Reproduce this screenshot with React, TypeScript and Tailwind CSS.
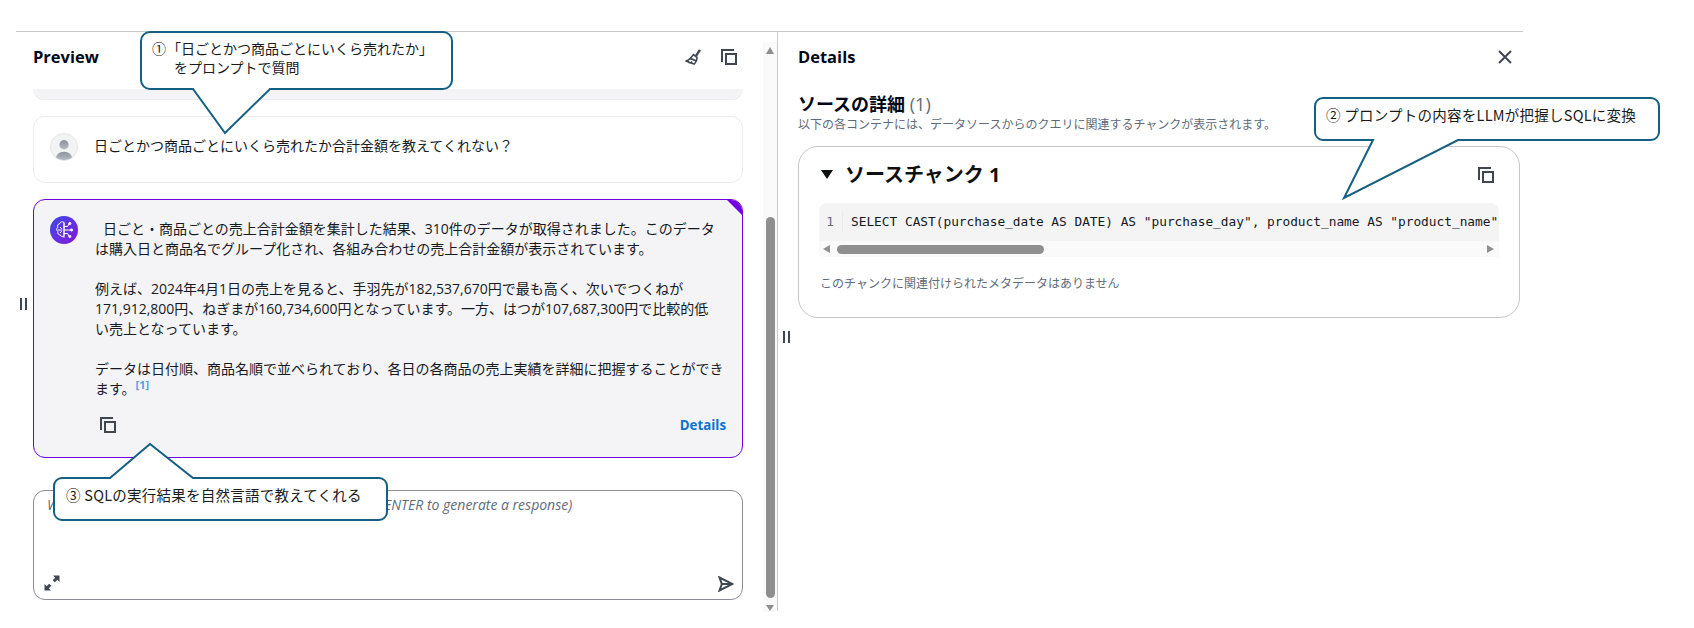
const uiFont = 'font-["Open_Sans","Noto_Sans_CJK_JP",sans-serif]';

// ── Icons ─────────────────────────────────────────────────────────────────────

function CopyIcon({ className = '' }: { className?: string }) {
  return (
    <svg viewBox="0 0 16 16" className={`h-4 w-4 ${className}`} fill="none" stroke="#414750" strokeWidth="2">
      <rect x="5" y="5" width="10" height="10" />
      <path d="M1 13V1h12" />
    </svg>
  );
}

function BroomIcon() {
  return (
    <svg viewBox="0 0 16 16" className="h-4 w-4" fill="none" stroke="#414750" strokeWidth="1.6" strokeLinejoin="round">
      <path d="M15 .8 10.8 7.200" strokeWidth="2.400" />
      <path d="M8.300 5.600 12 8.300c.2 2.200-.9 5-2.600 6.700l-2.200-.6-.7-1.500-.6 1.200-2-.7-.4-1.200-.7.500L1 12c2.300-.7 5.500-3.600 7.300-6.400Z" />
      <path d="M5 9.600c2 .2 4 1.200 6.300 2.400" strokeWidth="1.800" />
    </svg>
  );
}

function CloseIcon() {
  return (
    <svg viewBox="0 0 14 14" className="h-3.5 w-3.5" fill="none" stroke="#414750" strokeWidth="2">
      <path d="M1 1l12 12M13 1 1 13" />
    </svg>
  );
}

function ExpandIcon() {
  return (
    <svg viewBox="0 0 16 16" className="h-4 w-4" fill="#414750" stroke="none">
      <path d="M9 .5h6.500V7l-2.200-2.200-2.500 2.500-2.100-2.100 2.500-2.500Z" />
      <path d="M.5 9v6.500H7l-2.200-2.200 2.500-2.500-2.100-2.100-2.500 2.500Z" />
    </svg>
  );
}

function SendIcon() {
  return (
    <svg viewBox="0 0 16 16" className="h-4 w-4" fill="none" stroke="#414750" strokeWidth="2" strokeLinejoin="miter">
      <path d="M1.500 1.500 14.500 8 1.500 14.500 3.800 8Z" />
      <path d="M3.800 8h10" />
    </svg>
  );
}

function UserAvatar() {
  return (
    <div className="h-7 w-7 shrink-0 overflow-hidden rounded-full border border-[#e5e7eb] bg-[#f2f3f3]">
      <svg viewBox="0 0 28 28" className="h-full w-full">
        <defs>
          <linearGradient id="userShade" x1="0" y1="0" x2="0" y2="1">
            <stop offset="0" stopColor="#8d939c" />
            <stop offset="1" stopColor="#b4bac1" />
          </linearGradient>
        </defs>
        <circle cx="14" cy="11.500" r="5" fill="url(#userShade)" />
        <path d="M5 28c0-6 4-9 9-9s9 3 9 9Z" fill="url(#userShade)" />
      </svg>
    </div>
  );
}

function BotAvatar() {
  return (
    <div className="h-7 w-7 shrink-0 rounded-full bg-gradient-to-br from-[#2f45e6] to-[#8400dc]">
      <svg viewBox="0 0 28 28" className="h-full w-full" fill="none" stroke="#fff" strokeWidth="1">
        <path d="M14 6.500c-1.700-1.400-3.900-.6-4.200 1.100-1.900.3-2.800 2.200-1.900 3.600-1.700 1.100-1.600 3.500 0 4.400-.7 1.800.7 3.500 2.500 3.300.6 1.900 2.700 2.500 3.600 1.100Z" />
        <path d="M14 6.500v15M14 10.500h3.500l1.500-2.500M14 14h6M14 17.500h3.500l1.500 2.500M10 11l2 2M10 17l2-2M7.500 14H12" />
        <circle cx="19.800" cy="7.500" r="1.100" fill="#fff" />
        <circle cx="21.500" cy="14" r="1.100" fill="#fff" />
        <circle cx="19.800" cy="20.500" r="1.100" fill="#fff" />
      </svg>
    </div>
  );
}

function ResizeHandle() {
  return (
    <div className="flex gap-[3px]">
      <div className="h-3 w-[2px] bg-[#414750]" />
      <div className="h-3 w-[2px] bg-[#414750]" />
    </div>
  );
}

// ── Scrollbars ────────────────────────────────────────────────────────────────

function VerticalScrollbar() {
  return (
    <div className="ml-5 mt-[10px] flex h-[570px] w-[14px] shrink-0 flex-col items-center bg-[#fafafa] pt-[5px]">
      <div className="h-0 w-0 border-x-[4.500px] border-b-[7px] border-x-transparent border-b-[#8f8f8f]" />
      <div className="mt-[163px] h-[381px] w-[9px] rounded-full bg-[#8f8f8f]" />
      <div className="mt-[7px] h-0 w-0 border-x-[4.500px] border-t-[6px] border-x-transparent border-t-[#8f8f8f]" />
    </div>
  );
}

function HorizontalScrollbar() {
  return (
    <div className="flex h-4 items-center bg-[#fafafa] pl-1 pr-[5px]">
      <div className="h-0 w-0 border-y-[4.500px] border-r-[7px] border-y-transparent border-r-[#8f8f8f]" />
      <div className="ml-[7px] h-[9px] w-[207px] rounded-full bg-[#8f8f8f]" />
      <div className="ml-auto h-0 w-0 border-y-[4.500px] border-l-[7px] border-y-transparent border-l-[#8f8f8f]" />
    </div>
  );
}

// ── Annotation callouts ───────────────────────────────────────────────────────

function CalloutOne() {
  return (
    <div className="absolute left-[140px] top-[31px] h-[104px] w-[314px]">
      <svg viewBox="0 0 314 104" className="absolute inset-0 h-full w-full" fill="#fff" stroke="#156082" strokeWidth="2">
        <path d="M10 1h293a9 9 0 0 1 9 9v39a9 9 0 0 1-9 9H130L85 102 53 58H10a9 9 0 0 1-9-9V10a9 9 0 0 1 9-9Z" />
      </svg>
      <div className="absolute left-[12px] top-[8px] flex text-[14px] leading-[19px] text-[#1a1a1a]">
        <span className="w-[22px]">①</span>
        <span>
          <span className="-ml-[7px]">「日ごとかつ商品ごとにいくら売れたか」</span>
          <br />
          をプロンプトで質問
        </span>
      </div>
    </div>
  );
}

function CalloutTwo() {
  return (
    <div className="absolute left-[1314px] top-[97px] h-[104px] w-[346px]">
      <svg viewBox="0 0 346 104" className="absolute inset-0 h-full w-full" fill="#fff" stroke="#156082" strokeWidth="2">
        <path d="M9 1h328a8 8 0 0 1 8 8v26a8 8 0 0 1-8 8H144L30 101 59 43H9a8 8 0 0 1-8-8V9a8 8 0 0 1 8-8Z" />
      </svg>
      <div className="absolute left-[12px] top-[8px] whitespace-nowrap font-['Noto_Sans_CJK_JP',sans-serif] text-[14.500px] leading-[20px] tracking-[0.25px] text-[#1a1a1a]">
        ② プロンプトの内容をLLMが把握しSQLに変換
      </div>
    </div>
  );
}

function CalloutThree() {
  return (
    <div className="absolute left-[53px] top-[443px] h-[78px] w-[335px]">
      <svg viewBox="0 0 335 78" className="absolute inset-0 h-full w-full" fill="#fff" stroke="#156082" strokeWidth="2">
        <path d="M9 35h48L97 1l43 34h186a8 8 0 0 1 8 8v26a8 8 0 0 1-8 8H9a8 8 0 0 1-8-8V43a8 8 0 0 1 8-8Z" />
      </svg>
      <div className="absolute left-[13px] top-[42px] whitespace-nowrap font-['Noto_Sans_CJK_JP',sans-serif] text-[14.500px] leading-[20px] tracking-[0.25px] text-[#1a1a1a]">
        ③ SQLの実行結果を自然言語で教えてくれる
      </div>
    </div>
  );
}

// ── Panels ────────────────────────────────────────────────────────────────────

function PreviewPanel() {
  return (
    <div className="flex w-[710px] shrink-0 flex-col">
      <div className="flex h-[57px] items-center justify-between pb-[7px] pr-[6px]">
        <h2 className="text-[16.500px] font-bold text-[#000716]">Preview</h2>
        <div className="flex items-center gap-5">
          <BroomIcon />
          <CopyIcon />
        </div>
      </div>

      <div className="h-[11px] rounded-b-xl border-b border-[#eaeded] bg-[#f4f4f6]" />

      <div className="mt-4 flex h-[67px] gap-4 rounded-xl border border-[#eaeded] bg-white px-4 pt-4 text-[14px] leading-5 text-[#16191f]">
        <UserAvatar />
        <p className="pt-[3px]">日ごとかつ商品ごとにいくら売れたか合計金額を教えてくれない？</p>
      </div>

      <div className="relative mt-4 h-[259px] overflow-hidden rounded-xl border border-[#7300e0] bg-[#f4f4f6] px-4 pt-4 text-[14px] leading-5 text-[#16191f]">
        <div className="absolute right-0 top-0 h-[15px] w-[15px] bg-[#7300e0] [clip-path:polygon(0_0,100%_0,100%_100%)]" />
        <div className="flex gap-[17px]">
          <BotAvatar />
          <div className="whitespace-nowrap pt-[3px]">
            <p className="pl-2">日ごと・商品ごとの売上合計金額を集計した結果、310件のデータが取得されました。このデータ</p>
            <p>は購入日と商品名でグループ化され、各組み合わせの売上合計金額が表示されています。</p>
            <p className="mt-5">例えば、2024年4月1日の売上を見ると、手羽先が182,537,670円で最も高く、次いでつくねが</p>
            <p>171,912,800円、ねぎまが160,734,600円となっています。一方、はつが107,687,300円で比較的低</p>
            <p>い売上となっています。</p>
            <p className="mt-5">データは日付順、商品名順で並べられており、各日の各商品の売上実績を詳細に把握することができ</p>
            <p>
              ます。
              <sup className="text-[11px] font-bold text-[#539fe5]">[1]</sup>
            </p>
          </div>
        </div>
        <div className="mt-4 flex items-center justify-between pl-[50px]">
          <CopyIcon />
          <span className="text-[13.300px] font-bold text-[#0972d3]">Details</span>
        </div>
      </div>

      <div className="mt-8 flex h-[110px] flex-col justify-between rounded-xl border border-[#8c8c94] bg-white pb-[7px] pl-[13px] pr-2 pt-1">
        <p className="whitespace-nowrap text-[14px] italic leading-5 text-[#5f6b7a]">
          Write a query (press SHIFT + ENTER to start a new line, ENTER to generate a response)
        </p>
        <div className="flex items-end justify-between">
          <div className="-ml-[3px] mb-[1px]">
            <ExpandIcon />
          </div>
          <SendIcon />
        </div>
      </div>
    </div>
  );
}

function DetailsPanel() {
  return (
    <div className="flex w-[722px] shrink-0 flex-col">
      <div className="flex h-[57px] items-center justify-between pb-[7px] pr-2">
        <h2 className="text-[16.500px] font-bold text-[#000716]">Details</h2>
        <CloseIcon />
      </div>

      <h3 className="mt-[2px] text-[18px] font-bold leading-[26px] text-[#000716]">
        ソースの詳細 <span className="font-normal text-[#5f6b7a]">(1)</span>
      </h3>
      <p className="text-[12px] leading-4 text-[#5f6b7a]">
        以下の各コンテナには、データソースからのクエリに関連するチャンクが表示されます。
      </p>

      <div className="mt-[13px] h-[172px] rounded-[20px] border border-[#c6c6cd] bg-white px-5 pt-[11px]">
        <div className="flex h-[33px] items-center justify-between pr-[5px]">
          <div className="flex items-center gap-3 pl-[2px]">
            <div className="h-0 w-0 border-x-[6px] border-t-[9px] border-x-transparent border-t-[#0f1111]" />
            <span className="text-[20px] font-bold text-[#0f1111]">ソースチャンク 1</span>
          </div>
          <CopyIcon className="mt-[1px]" />
        </div>

        <div className="mt-3 overflow-hidden rounded-t-lg">
          <div className="flex h-[38px] items-center whitespace-nowrap bg-[#f4f4f4] font-['DejaVu_Sans_Mono',monospace] text-[12.800px] text-[#16191f]">
            <span className="w-6 shrink-0 border-r border-[#e9ebed] pr-2 text-right leading-[22px] text-[#5f6b7a]">1</span>
            <span className="pl-2">SELECT CAST(purchase_date AS DATE) AS "purchase_day", product_name AS "product_name"</span>
          </div>
          <HorizontalScrollbar />
        </div>

        <p className="mt-[19px] pl-[1px] text-[12px] leading-4 text-[#5f6b7a]">
          このチャンクに関連付けられたメタデータはありません
        </p>
      </div>
    </div>
  );
}

// ── App ───────────────────────────────────────────────────────────────────────

export default function App() {
  return (
    <div className={`relative h-[628px] w-[1694px] overflow-hidden bg-white pl-4 pt-[31px] ${uiFont}`}>
      <div className="flex h-[580px] w-[1507px] border-t border-[#c9c9c9]">
        <div className="flex w-[17px] shrink-0 items-center justify-center pb-9 pl-[1px] pr-[3px]">
          <ResizeHandle />
        </div>
        <PreviewPanel />
        <VerticalScrollbar />
        <div className="flex w-[21px] shrink-0 items-center justify-center border-l border-[#c9c9c9] pr-1 pt-[30px]">
          <ResizeHandle />
        </div>
        <DetailsPanel />
      </div>

      <CalloutOne />
      <CalloutTwo />
      <CalloutThree />
    </div>
  );
}
